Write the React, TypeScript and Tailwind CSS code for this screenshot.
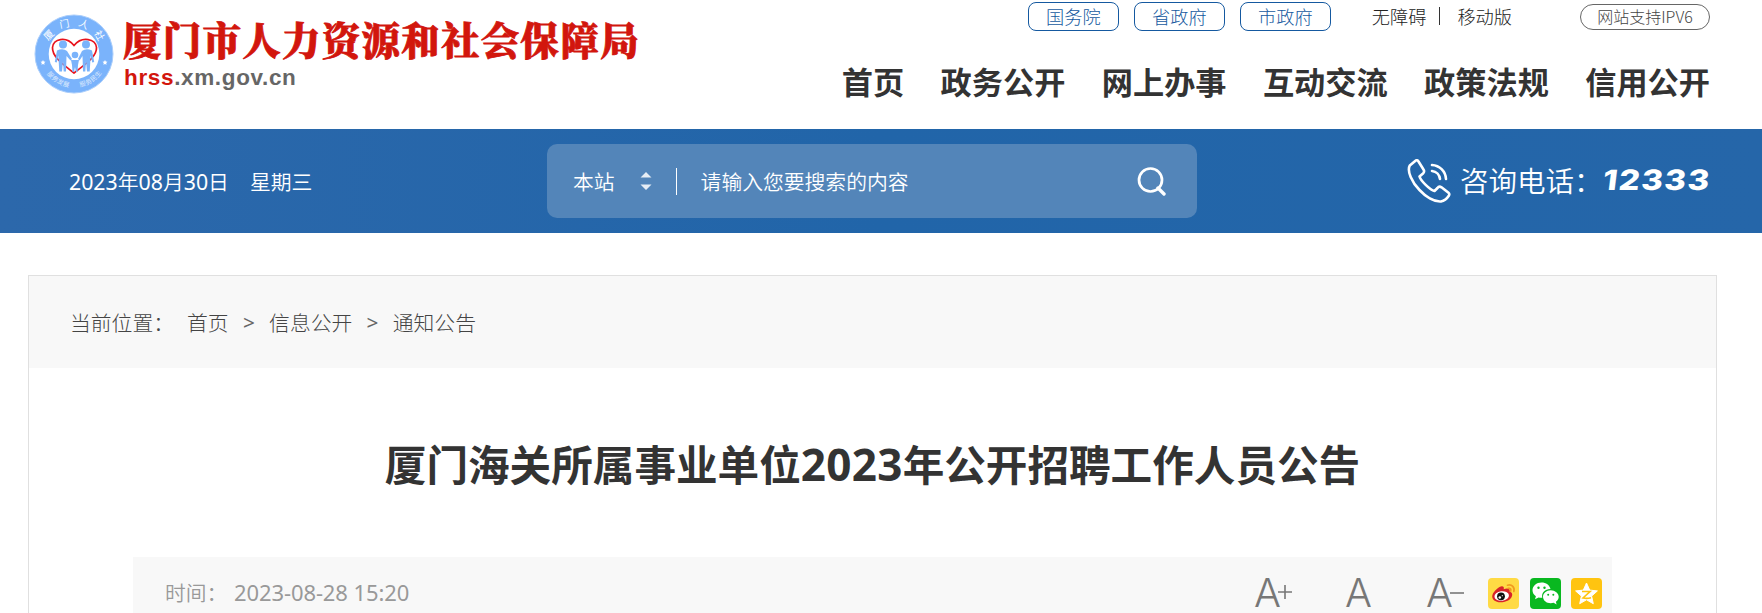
import React from "react";

const govLinks = ["国务院", "省政府", "市政府"];
const navItems = ["首页", "政务公开", "网上办事", "互动交流", "政策法规", "信用公开"];
const crumbs = ["首页", "信息公开", "通知公告"];

const Emblem: React.FC = () => (
  <svg viewBox="0 0 80 80" className="h-[80px] w-[80px] shrink-0">
    <defs>
      <path id="ringTop" d="M12.200 40a27.800 27.800 0 0 1 55.600 0" />
      <path id="ringBottom" d="M6.500 40a33.500 33.500 0 0 0 67 0" />
    </defs>
    <circle cx="40" cy="40" r="39" fill="#7ab3fb" stroke="#a9cdfb" strokeWidth="1" />
    <circle cx="40" cy="40" r="25.300" fill="#fff" />
    <g fill="#fff" fontFamily="'Noto Sans CJK SC', sans-serif">
      <text fontSize="9.800" letterSpacing="7.500" textAnchor="middle">
        <textPath href="#ringTop" startOffset="54%">厦门人社</textPath>
      </text>
      <text fontSize="6.300" opacity="0.75" letterSpacing="0.300">
        <textPath href="#ringBottom" startOffset="20%">服务发展</textPath>
      </text>
      <text fontSize="6.300" opacity="0.75" letterSpacing="0.300">
        <textPath href="#ringBottom" startOffset="56%">服务民生</textPath>
      </text>
    </g>
    <path d="m9 46 .8 1.600 1.700.2-1.300 1.200.4 1.700-1.600-.8-1.600.8.4-1.700-1.300-1.200 1.700-.2z" fill="#fff" />
    <path d="m71 46 .8 1.600 1.700.2-1.300 1.200.4 1.700-1.600-.8-1.600.8.4-1.700-1.300-1.200 1.700-.2z" fill="#fff" />
    <path
      d="M40 59C30 51 18 43 18.500 33.500C19 25 32 21.500 40 31.500C48 21.500 62 25 62.500 33.500C63 43 50 51 40 59Z"
      fill="none"
      stroke="#e8131d"
      strokeWidth="1.700"
    />
    <g fill="#7ab3fb">
      <circle cx="29" cy="30.500" r="4" />
      <circle cx="52" cy="30.500" r="4" />
      <circle cx="41" cy="41" r="3.300" />
      <path d="M23 36.500q6-2.500 10 .5l5 8-1.500 1.500-4-4.500-.5 15.500h-2.300l-.7-10-1 10h-2.700l-1-16-1.500 7-2-.5z" />
      <path d="M58 36.500q-6-2.500-10 .5l-4 8 1.500 1.500 3-4.500.5 15.500h2.300l.7-10 1 10h2.700l1-16 1.500 7 2-.5z" />
      <path d="M37 46h8l-1 5-.5 7h-1.500l-1-5-1 5h-1.500l-.5-7z" />
    </g>
  </svg>
);

const PhoneIcon: React.FC = () => (
  <svg
    viewBox="0 0 44 44"
    className="h-[44px] w-[44px]"
    fill="none"
    stroke="#fff"
    strokeWidth="2.600"
    strokeLinecap="round"
    strokeLinejoin="round"
  >
    <path d="M8.500 1.700 2.800 6.500C-.3 12 5 23.500 12.500 31C19 38 27.500 43 34 42.500C37 42 40 39.500 42 36.500C42.500 35.500 42.300 34.500 41.500 33.800L34.500 28.300C33 27.300 31.500 27.500 30.500 29L27.500 32C23 31 13.500 21.500 12.500 17.500L16 14.500C17.300 13.200 17.500 12 16.500 10.500L11.500 2.500C10.700 1.200 9.500.900 8.500 1.700Z" />
    <path d="M25 6C32.500 6.500 38.500 12 39 20" />
    <path d="M25 12C29.500 12.500 32.500 16 33 20" />
  </svg>
);

const SearchIcon: React.FC = () => (
  <svg viewBox="0 0 30 30" className="h-[30px] w-[30px]" fill="none" stroke="#fff" strokeWidth="2.700">
    <circle cx="13.500" cy="14" r="11.500" />
    <path d="m21 22 6 6" strokeWidth="3.400" strokeLinecap="round" />
  </svg>
);

const WeiboIcon: React.FC = () => (
  <svg viewBox="0 0 31 31" className="h-[31px] w-[31px]">
    <rect width="31" height="31" rx="4" fill="#ffda44" />
    <path
      d="M11.500 9C14.500 7.300 16.500 8.500 15.700 11.200C19.500 9.500 22.500 10.700 21.500 13.600C24.500 14.500 25 17 23.200 19.800C20.500 23.800 13 25.500 8.300 23.500C3.500 21.500 3.200 17.500 6 14C7.500 12 9.500 10 11.500 9Z"
      fill="#d8232a"
    />
    <ellipse cx="13.700" cy="18" rx="7.300" ry="4.800" transform="rotate(-8 13.700 18)" fill="#fff" />
    <circle cx="13" cy="18.300" r="3.900" fill="#111" />
    <circle cx="11.800" cy="19.500" r="1.300" fill="#fff" />
    <circle cx="14.300" cy="17.700" r=".6" fill="#fff" />
    <g fill="none" stroke="#f29a1f" strokeWidth="1.700" strokeLinecap="round">
      <path d="M19.500 7.200C24 6 27 9.500 25.800 13.500" />
      <path d="M20.300 10.300C22.300 10 23.300 11.300 22.700 13" />
    </g>
  </svg>
);

const WechatIcon: React.FC = () => (
  <svg viewBox="0 0 31 31" className="h-[31px] w-[31px]">
    <rect width="31" height="31" rx="4" fill="#09b820" />
    <path
      d="M11.500 4.500C6.500 4.500 2.500 8 2.500 12.200C2.500 14.700 3.800 16.800 5.900 18.200L5 21.300L8.600 19.400C9.800 19.800 11 19.900 12.300 19.800C11 14.500 15.500 10.800 20.500 11C19.800 7.200 16 4.500 11.500 4.500Z"
      fill="#fff"
    />
    <path
      d="M20.700 12.200C16.400 12.200 13 15.200 13 18.800C13 22.400 16.400 25.300 20.700 25.300C21.700 25.300 22.700 25.100 23.600 24.800L26.600 26.400L25.900 23.700C27.700 22.500 28.700 20.800 28.700 18.800C28.700 15.200 25 12.200 20.700 12.200Z"
      fill="#fff"
    />
    <g fill="#09b820">
      <circle cx="8.500" cy="9.700" r="1.200" />
      <circle cx="14.500" cy="9.700" r="1.200" />
      <circle cx="18.200" cy="16.800" r="1" />
      <circle cx="23.300" cy="16.800" r="1" />
    </g>
  </svg>
);

const QzoneIcon: React.FC = () => (
  <svg viewBox="0 0 31 31" className="h-[31px] w-[31px]">
    <rect width="31" height="31" rx="4" fill="#ffc410" />
    <path
      d="m15.500 5 3.200 7.100 7.700.8-5.800 5.200 1.700 7.600-6.800-3.900-6.800 3.900 1.700-7.600-5.800-5.200 7.700-.8z"
      fill="#fff"
      stroke="#fff"
      strokeLinejoin="round"
    />
    <path d="M11 13.500h8l-7 6.500q4 1 8-.2" fill="none" stroke="#ffc410" strokeWidth="1.700" />
  </svg>
);

// digits and latin are set a little larger than the han text around them
const Num: React.FC<{ children: React.ReactNode }> = ({ children }) => (
  <span className="font-['Noto_Sans',sans-serif] text-[21.300px] font-normal">{children}</span>
);

const App: React.FC = () => {
  return (
    <div className="h-[613px] w-[1762px] overflow-hidden bg-white font-['Noto_Sans_CJK_SC',sans-serif] text-[#333]">
      {/* Header */}
      <header className="flex h-[129px] justify-between pr-[52px] pl-[34px]">
        <div className="flex pt-[14px]">
          <Emblem />
          <div className="ml-[9px] whitespace-nowrap">
            <div className="mt-px h-[49px] font-['Noto_Serif_CJK_SC','Noto_Sans_CJK_SC',serif] text-[38.500px] leading-[48px] font-black tracking-[1.250px] text-[#d2160d] [-webkit-text-stroke:0.800px_#d2160d]">
              厦门市人力资源和社会保障局
            </div>
            <div className="ml-px font-['Liberation_Sans',sans-serif] text-[22.500px] leading-[28px] font-bold tracking-[0.650px] text-[#666]">
              <span className="text-[#d2160d]">hrss</span>.xm.gov.cn
            </div>
          </div>
        </div>

        <div className="flex flex-col items-end">
          <div className="flex pt-[2px] text-[18.200px] leading-[26px] font-light whitespace-nowrap">
            <div className="flex gap-[15px]">
              {govLinks.map((name) => (
                <a key={name} className="h-[29px] w-[91px] rounded-[8px] border border-[#1559a0] text-center text-[#1559a0]">
                  {name}
                </a>
              ))}
            </div>
            <div className="ml-[41px] flex h-[28px] items-center text-[#222]">
              <span>无障碍</span>
              <span className="mr-[17px] ml-[13px] h-[18px] w-px bg-[#333]" />
              <span>移动版</span>
            </div>
            <a className="mt-[2px] ml-[68px] h-[26px] w-[130px] rounded-full border border-[#666] text-center text-[16px] leading-[23px] text-[#444]">
              网站支持IPV6
            </a>
          </div>
          <nav className="mt-[27px] flex gap-[36.400px] text-[31.200px] leading-[46px] font-bold whitespace-nowrap">
            {navItems.map((item) => (
              <a key={item}>{item}</a>
            ))}
          </nav>
        </div>
      </header>

      {/* Search bar */}
      <div className="flex h-[104px] items-center bg-linear-to-r from-[#2c68ab] via-[#2165a9] to-[#2566a9] pr-[50px] pl-[69px] whitespace-nowrap text-white">
        <div className="w-[478px] text-[20.800px] leading-[30px] font-[350]">
          <Num>2023</Num>年<Num>08</Num>月<Num>30</Num>日<span className="ml-[21px]">星期三</span>
        </div>
        <div className="flex h-[74px] w-[650px] items-center rounded-[10px] bg-[#5385b9] pr-[30px] pl-[26px] text-[20.800px] font-[350]">
          <span className="mt-[2px]">本站</span>
          <svg viewBox="0 0 12 22" className="ml-[25px] h-[22px] w-[12px]" fill="#e6edf5">
            <path d="M6 2l5.500 5.500H.5zM6 20l5.500-5.500H.5z" />
          </svg>
          <span className="ml-[24px] h-[27px] w-px bg-white" />
          <span className="mt-[2px] ml-[24px] flex-1">请输入您要搜索的内容</span>
          <SearchIcon />
        </div>
        <div className="ml-auto flex items-center">
          <PhoneIcon />
          <span className="-mt-[2px] ml-[9px] w-[143px] text-[28.500px] leading-[40px] font-[350]">咨询电话：</span>
          <span className="-mt-[3px] w-[109px]">
            <span className="inline-block origin-left scale-x-[1.180] -skew-x-6 font-['Inter',sans-serif] text-[28px] leading-[30px] font-extrabold tracking-[1.200px]">
              12333
            </span>
          </span>
        </div>
      </div>

      {/* Article */}
      <main className="mt-[42px] ml-[28px] h-[400px] w-[1689px] border border-[#e0e0e0]">
        <div className="flex h-[92px] items-center bg-[#f8f8f8] pl-[41px] text-[20.800px] leading-[30px] font-light text-[#444]">
          <span className="w-[117px] whitespace-nowrap">当前位置：</span>
          {crumbs.map((crumb, i) => (
            <React.Fragment key={crumb}>
              {i > 0 && (
                <span className="w-[40.500px] text-center font-['Noto_Sans',sans-serif] font-normal text-[#666]">&gt;</span>
              )}
              <span>{crumb}</span>
            </React.Fragment>
          ))}
        </div>

        <h1 className="mt-[65px] h-[60px] text-center text-[41.600px] leading-[60px] font-bold whitespace-nowrap">
          厦门海关所属事业单位
          <span className="font-['Noto_Sans',sans-serif] text-[44px] leading-[50px] tracking-[0.300px]">2023</span>
          年公开招聘工作人员公告
        </h1>

        <div className="mt-[64px] ml-[104px] flex h-[73px] w-[1479px] items-start bg-[#f8f8f8] pt-[21px] pr-[10px] pl-[32px]">
          <div className="-mt-px flex items-baseline text-[20.800px] leading-[30px] whitespace-nowrap text-[#999]">
            <span className="w-[69px] font-[350]">时间：</span>
            <span className="font-['Noto_Sans',sans-serif] text-[22px] tracking-[-0.100px]">2023-08-28 15:20</span>
          </div>
          <div className="ml-auto flex">
            <div className="flex h-[31px] font-['Inter',sans-serif] text-[40px] leading-[30px] font-light text-[#777]">
              <span className="flex w-[91px]">
                A
                <svg viewBox="0 0 14 14" className="mt-[7px] -ml-[3px] h-[14px] w-[14px]" stroke="#777" strokeWidth="1.600">
                  <path d="M7 0v14M0 7h14" />
                </svg>
              </span>
              <span className="w-[81px]">A</span>
              <span className="flex w-[62px]">
                A
                <svg viewBox="0 0 14 14" className="mt-[8px] -ml-[3px] h-[14px] w-[14px]" stroke="#777" strokeWidth="1.600">
                  <path d="M0 7h14" />
                </svg>
              </span>
            </div>
            <div className="flex gap-[10.500px]">
              <WeiboIcon />
              <WechatIcon />
              <QzoneIcon />
            </div>
          </div>
        </div>
      </main>
    </div>
  );
};

export default App;
